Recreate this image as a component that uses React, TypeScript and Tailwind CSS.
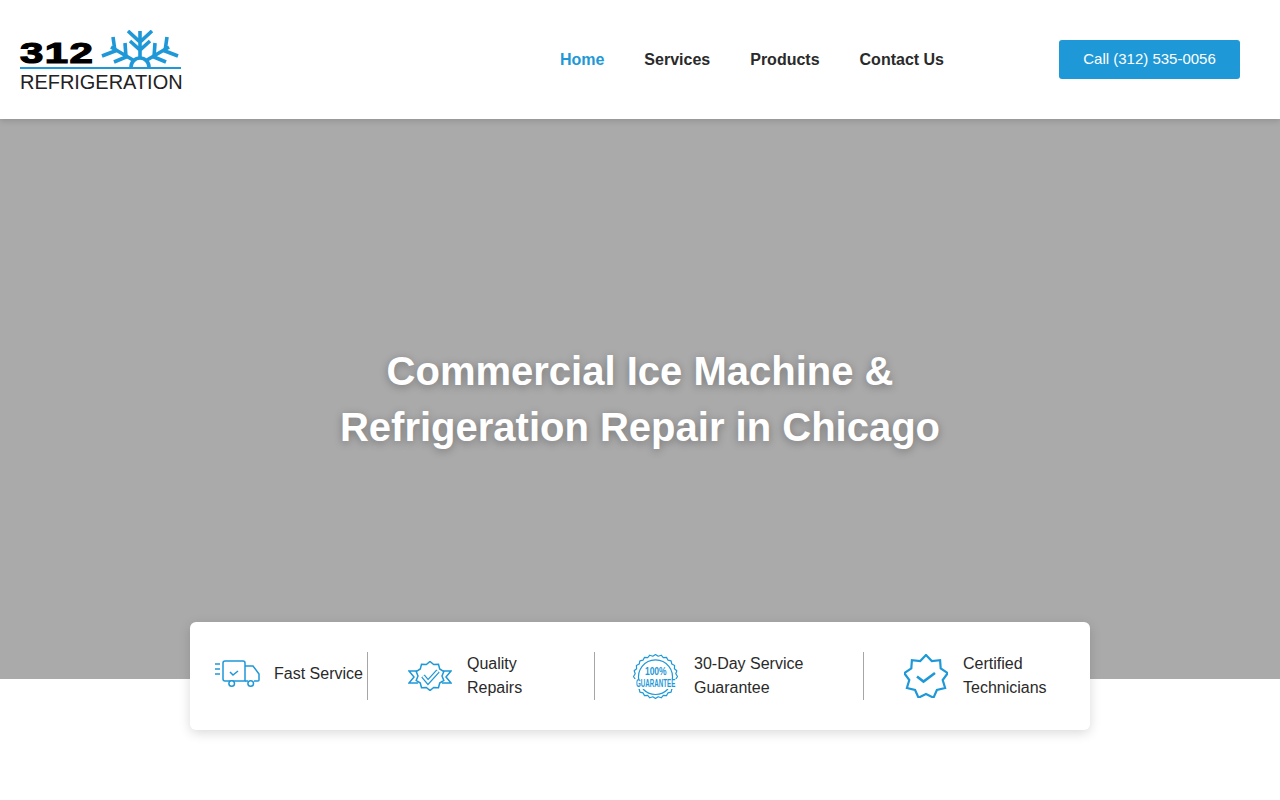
const navItems = ['Home', 'Services', 'Products', 'Contact Us'];

function starPoints(tips: number, cx: number, cy: number, outer: number, inner: number) {
    return Array.from({ length: tips * 2 }, (_, i) => {
        const a = (i / tips) * Math.PI - Math.PI / 2;
        const r = i % 2 ? inner : outer;
        return `${(cx + r * Math.cos(a)).toFixed(1)},${(cy + r * Math.sin(a)).toFixed(1)}`;
    }).join(' ');
}

function Logo() {
    return (
        <div className="relative h-[60px] w-[163px]">
            <span className="absolute left-px top-[5px] origin-left scale-x-[1.4] text-[30px] leading-[36px] font-black tracking-[1px] text-black [-webkit-text-stroke:1.2px_black]">
                312
            </span>
            <svg
                className="absolute left-[82px] top-0"
                width="78"
                height="38"
                viewBox="0 0 78 38"
                fill="none"
                stroke="#1e98d7"
                strokeWidth="3.6"
            >
                <path d="M39 1V29M27 1l12 11 12-11M29 11l10 9 10-9" />
                <path d="M32 30L10 17M46 30L68 17" />
                <path d="M12 7l2 14L1 26M24 13l1 14-12 5M66 7l-2 14 13 5M54 13l-1 14 12 5" />
                <path d="M30 37a9 9 0 0 1 18 0" />
            </svg>
            <div className="absolute left-px top-[37px] h-[2px] w-[161px] bg-[#1e98d7]" />
            <span className="absolute left-px top-[41px] origin-left scale-x-[.95] text-[21px] leading-[21px] text-[#222]">
                REFRIGERATION
            </span>
        </div>
    );
}

function TruckIcon() {
    return (
        <svg width="46" height="28" viewBox="0 0 46 28" fill="none" stroke="#1e98d7" strokeWidth="1.5">
            <path d="M0 4h5M0 9h5M0 14h5" />
            <path d="M8 3a2 2 0 0 1 2-2h18a2 2 0 0 1 2 2v18H10a2 2 0 0 1-2-2z" />
            <path d="M30 6h8l6 8v6a1 1 0 0 1-1 1h-4M30 21h3" />
            <path d="M15 12l3 3 5-4" />
            <circle cx="16.700" cy="23.500" r="2.800" fill="white" />
            <circle cx="35.700" cy="23.500" r="2.800" fill="white" />
        </svg>
    );
}

function RibbonIcon() {
    return (
        <svg width="44" height="30" viewBox="0 0 44 30" fill="none" stroke="#1e98d7" strokeWidth="1.5">
            <polygon points={starPoints(10, 22, 15, 14.5, 12)} />
            <path d="M9 10H1l5 6-5 6h9M35 10h8l-5 6 5 6h-9" />
            <path d="M15 15l5 6 10-11" strokeWidth="4.500" />
            <path d="M15 15l5 6 10-11" strokeWidth="2" stroke="white" />
        </svg>
    );
}

function GuaranteeIcon() {
    return (
        <div className="relative h-[45px] w-[45px]">
            <svg width="45" height="45" viewBox="0 0 45 45" fill="none" stroke="#1e98d7" strokeWidth="1.200">
                <polygon points={starPoints(24, 22.5, 22.5, 22, 20.5)} strokeLinejoin="round" />
                <path d="M6 27A17 17 0 1 1 39 27M10 35A17 17 0 0 0 35 35" />
            </svg>
            <span className="absolute left-0 top-[12px] flex w-[45px] justify-center text-[10px] leading-[11px] text-[#1e98d7]">
                <span className="scale-x-[.85] font-bold">100%</span>
            </span>
            <span className="absolute left-0 top-[25px] flex w-[45px] justify-center bg-white text-[10px] leading-[10px] text-[#1e98d7]">
                <span className="scale-x-[.62] font-bold whitespace-nowrap">GUARANTEE</span>
            </span>
        </div>
    );
}

function BadgeIcon() {
    return (
        <svg width="44" height="44" viewBox="0 0 44 44" fill="none" stroke="#1e98d7" strokeWidth="2.200">
            <polygon points={starPoints(9, 22, 23, 22, 17)} />
            <path d="M13 22.500l6.500 5 11.500-8.500" strokeWidth="2.600" />
        </svg>
    );
}

const features = [
    { icon: <TruckIcon />, label: ['Fast Service'], className: 'w-[153px] gap-[13px] border-r border-[#a6a6a6] pb-1' },
    { icon: <RibbonIcon />, label: ['Quality', 'Repairs'], className: 'w-[227px] gap-[15px] border-r border-[#a6a6a6] pl-10' },
    { icon: <GuaranteeIcon />, label: ['30-Day Service', 'Guarantee'], className: 'w-[269px] gap-4 border-r border-[#a6a6a6] pl-[38px]' },
    { icon: <BadgeIcon />, label: ['Certified', 'Technicians'], className: 'gap-[15px] pl-10' },
];

export default function App() {
    return (
        <div className="min-h-[800px] bg-white font-['Liberation_Sans',Arial,sans-serif]">
            <header className="relative z-10 flex h-[119px] items-center justify-between bg-white pl-[19px] pr-10 shadow-[0_2px_6px_rgba(0,0,0,0.15)]">
                <Logo />
                <div className="flex items-center">
                    <nav className="mr-[115px] flex gap-10">
                        {navItems.map((item) => (
                            <a
                                key={item}
                                className={
                                    item === 'Home'
                                        ? 'text-base font-bold text-[#1e98d7]'
                                        : 'text-base font-bold text-[#2a2a2a]'
                                }
                            >
                                {item}
                            </a>
                        ))}
                    </nav>
                    <a className="flex h-[39px] w-[181px] items-center justify-center rounded-[3px] bg-[#1e98d7] text-[15px] text-white">
                        Call (312) 535-0056
                    </a>
                </div>
            </header>

            <section className="flex h-[560px] flex-col items-center bg-[#aaaaaa] pt-[224px]">
                <h1 className="text-center text-[40px] leading-[56px] font-bold text-white [text-shadow:0_2px_8px_rgba(0,0,0,0.3)]">
                    Commercial Ice Machine &amp;
                    <br />
                    Refrigeration Repair in Chicago
                </h1>
            </section>

            <div className="relative z-10 mx-auto -mt-[57px] flex h-[108px] w-[900px] items-center rounded-md bg-white pl-[25px] shadow-[0_3px_12px_rgba(0,0,0,0.15)]">
                {features.map((f) => (
                    <div key={f.label[0]} className={`flex h-12 items-center ${f.className}`}>
                        {f.icon}
                        <div className="text-base leading-6 text-[#2a2a2a]">
                            {f.label.map((line) => (
                                <div key={line}>{line}</div>
                            ))}
                        </div>
                    </div>
                ))}
            </div>
        </div>
    );
}
